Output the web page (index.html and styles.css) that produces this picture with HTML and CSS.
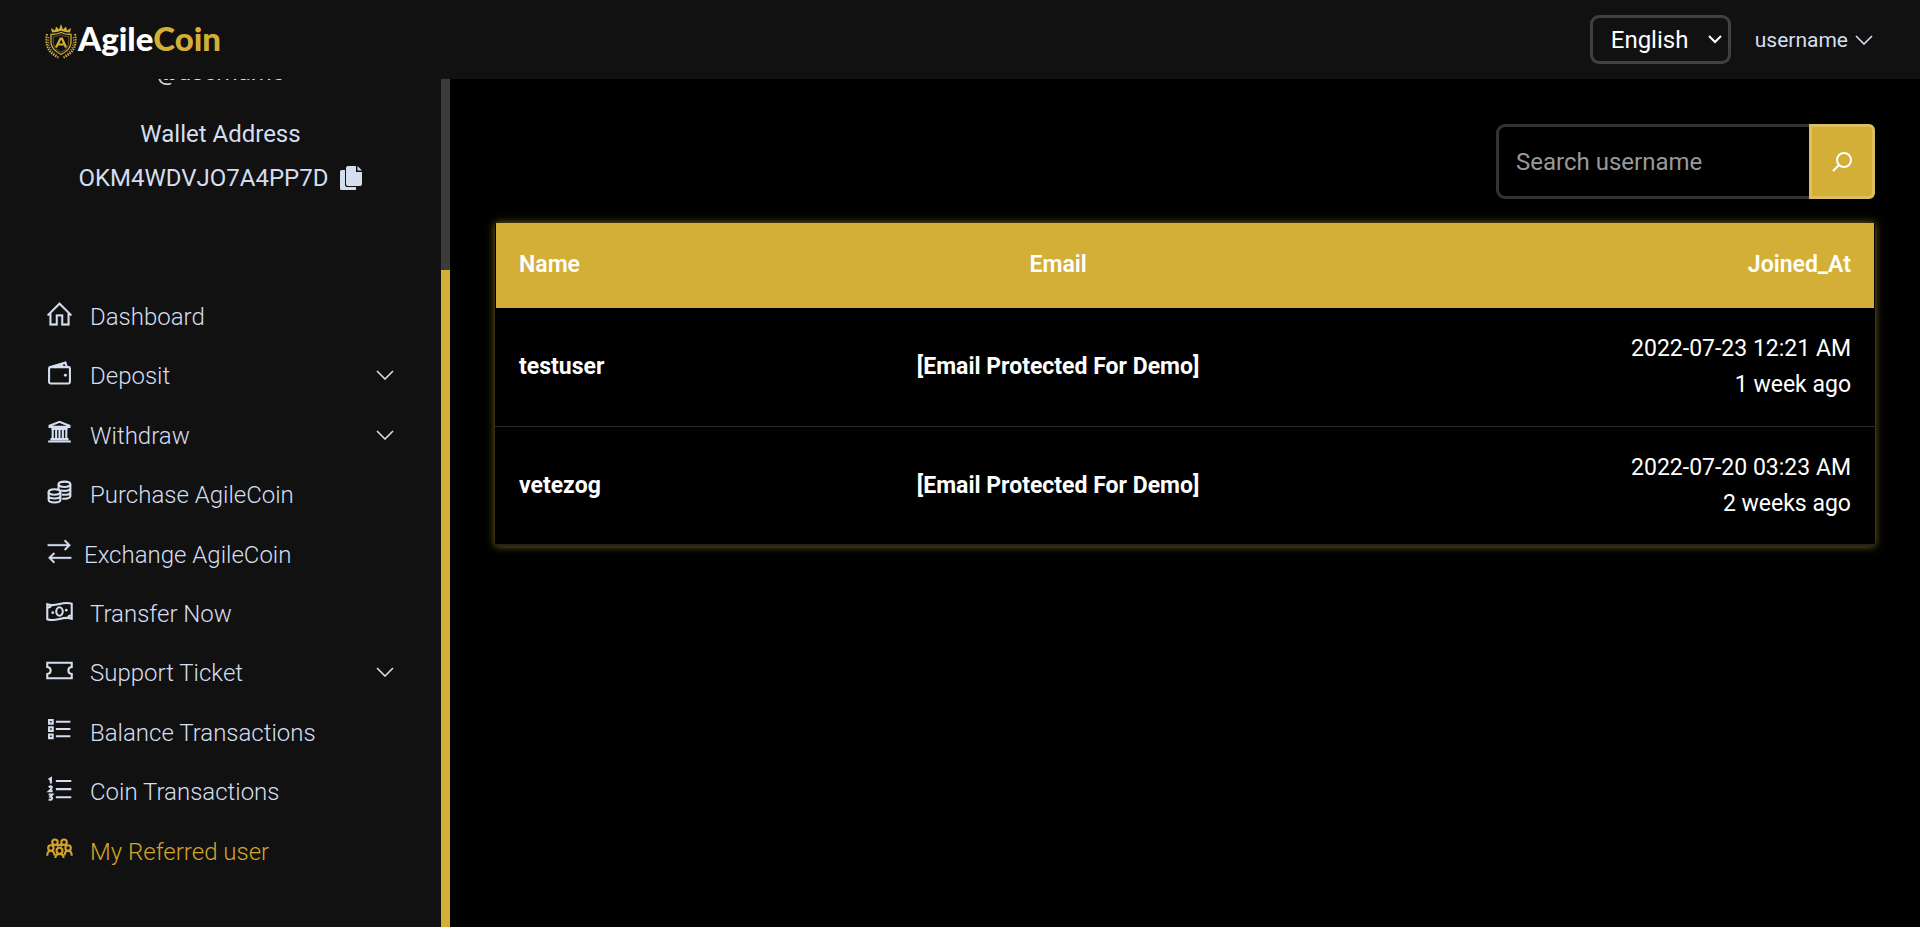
FILE: index.html
```html
<!DOCTYPE html>
<html lang="en">
<head>
<meta charset="utf-8">
<title>AgileCoin - My Referred user</title>
<link rel="stylesheet" href="styles.css">
</head>
<body>
<header class="topbar">
  <a class="logo" href="#">
    <svg class="logo-mark" viewBox="0 0 34 36" aria-hidden="true">
      <g fill="none" stroke="currentColor">
        <path stroke-width="1.3" d="M7 10.500Q13 10.500 17 8.500Q21 10.500 27 10.500V19Q26 26 17 30.500Q8 26 7 19Z"/>
        <path stroke-width="1" d="M9.300 12.500Q14 12.300 17 10.800Q20 12.300 24.700 12.500V19Q24 25 17 28.300Q10 25 9.300 19Z" opacity=".45"/>
        <path stroke-width="2.200" d="M12 23.500L16.500 14.500H18L22 23.500M14 20.500H20"/>
        <path stroke-width="2" stroke-dasharray="1.500 1" d="M3 10Q-.5 27 14.500 33.500M31 10Q34.500 27 19.500 33.500"/>
        <path stroke-width="1.600" stroke-dasharray="1.300 1.200" d="M4.500 13Q3 25 13 31.500M29.500 13Q31 25 21 31.500" opacity=".7"/>
      </g>
      <path fill="currentColor" d="M8 8.500L7 4L11 6.500L12 2.500L15 5.500L17 0L19 5.500L22 2.500L23 6.500L27 4L26 8.500Q21 8.500 17 6.800Q13 8.500 8 8.500Z"/>
    </svg>
    <span class="logo-text">Agile<span class="gold">Coin</span></span>
  </a>
  <div class="top-actions">
    <div class="lang">
      <select class="lang-select" aria-label="Language"><option>English</option><option>Spanish</option></select>
      <svg class="lang-arrow" viewBox="0 0 14 9" aria-hidden="true"><path d="M1 1L7 7L13 1"/></svg>
    </div>
    <button class="user-menu" type="button">username
      <svg class="chevron" viewBox="0 0 18 10" aria-hidden="true"><path d="M1 1L9 9L17 1"/></svg>
    </button>
  </div>
</header>
<div class="shell">
  <aside class="sidebar">
    <div class="side-scroll">
      <div class="profile">
        <p class="handle">@username</p>
        <p class="wallet-label">Wallet Address</p>
        <p class="wallet">OKM4WDVJO7A4PP7D
          <button class="copy" type="button" aria-label="Copy wallet address">
            <svg viewBox="0 0 22 24" aria-hidden="true"><path d="M8 0H16V6H22V18Q22 20 20 20H8Q6 20 6 18V2Q6 0 8 0ZM17.500 0L22 4.500H17.500ZM1.500 4H5V19Q5 21 7 21H16V24H1.500Q0 24 0 22.500V5.500Q0 4 1.500 4Z"/></svg>
          </button>
        </p>
      </div>
      <nav>
        <ul class="menu">
          <li><a class="item" href="#"><svg class="icon fill" viewBox="0 0 32 32" aria-hidden="true"><path d="M16 2.594L2.281 16.281L3.719 17.719L5 16.438V28H14V18H18V28H27V16.438L28.281 17.719L29.719 16.281ZM16 5.438L25 14.438V26H20V16H12V26H7V14.438Z"/></svg>Dashboard</a></li>
          <li><a class="item" href="#"><svg class="icon" viewBox="0 0 32 32" aria-hidden="true"><rect x="4.500" y="9" width="23" height="18" rx="1.500"/><path d="M5 9L22.500 4L24 8.500M11 9L20 6.700"/><circle class="dot" cx="22.500" cy="18" r="1.600"/></svg>Deposit<svg class="chevron" viewBox="0 0 18 10" aria-hidden="true"><path d="M1 1L9 9L17 1"/></svg></a></li>
          <li><a class="item" href="#"><svg class="icon" viewBox="0 0 32 32" aria-hidden="true"><path d="M5 9.800V8.600L16 4.300L27 8.600V9.800ZM7 12H25M8.500 12V23M12.300 12V23M16 12V23M19.700 12V23M23.500 12V23M6 23.300H26M3.500 26H28.500"/></svg>Withdraw<svg class="chevron" viewBox="0 0 18 10" aria-hidden="true"><path d="M1 1L9 9L17 1"/></svg></a></li>
          <li><a class="item" href="#"><svg class="icon" viewBox="0 0 32 32" aria-hidden="true"><ellipse cx="21.500" cy="7" rx="6.500" ry="3"/><path d="M15 7V12M28 7V20C28 22 24 23.300 19 22.800M28 11.300C28 14 21 15 17 13.500M28 15.600C28 18 23 19 18.500 18.200"/><ellipse cx="10.500" cy="15.500" rx="6.500" ry="3"/><path d="M4 15.500V24C4 28 17 28 17 24V15.500M4 19.700C4 23.500 17 23.500 17 19.700"/></svg>Purchase AgileCoin</a></li>
          <li><a class="item tight" href="#"><svg class="icon fill" viewBox="0 0 32 32" aria-hidden="true"><path d="M22.406 3L21 4.406L24.594 8H3V10H24.594L21 13.594L22.406 15L28.406 9ZM9.594 17L3.594 23L9.594 29L11 27.594L7.406 24H29V22H7.406L11 18.406Z"/></svg>Exchange AgileCoin</a></li>
          <li><a class="item" href="#"><svg class="icon" viewBox="0 0 32 32" aria-hidden="true"><path d="M2.500 8C12 12 20 3.500 29.500 7.500V24C20 20 12 28.500 2.500 24.500Z"/><ellipse cx="16" cy="16" rx="3.600" ry="4.600"/><path d="M2.500 11.500Q6 12 6.500 9M29.500 20.500Q26 20 25.500 23"/><circle class="dot" cx="8.500" cy="17.300" r="1.500"/><circle class="dot" cx="23.500" cy="14.500" r="1.500"/></svg>Transfer Now</a></li>
          <li><a class="item" href="#"><svg class="icon" viewBox="0 0 32 32" aria-hidden="true"><path d="M2.500 7.500H29.500V12.200C24.500 12.700 24.500 19.300 29.500 19.800V24.500H2.500V19.800C7.500 19.300 7.500 12.700 2.500 12.200Z"/></svg>Support Ticket<svg class="chevron" viewBox="0 0 18 10" aria-hidden="true"><path d="M1 1L9 9L17 1"/></svg></a></li>
          <li><a class="item" href="#"><svg class="icon" viewBox="0 0 32 32" aria-hidden="true"><path d="M4.500 5.500H8.500V9.500H4.500ZM4.500 13.500H8.500V17.500H4.500ZM4.500 21.500H8.500V25.500H4.500ZM12 7.500H28M12 15.500H28M12 23.500H28"/></svg>Balance Transactions</a></li>
          <li><a class="item" href="#"><svg class="icon" viewBox="0 0 32 32" aria-hidden="true"><path d="M4 5L6.500 3.500V9.500M4 13.300Q7.500 11.500 7.500 13.800Q7.500 15.300 4.500 18H8.500M4 21.500H8L6 24Q8.200 24.300 7.700 26.300Q7 28 4 27M12 6.700H29M12 15.600H29M12 24.600H29"/></svg>Coin Transactions</a></li>
          <li><a class="item active" href="#" aria-current="page"><svg class="icon" viewBox="0 0 32 32" aria-hidden="true"><circle cx="11" cy="9" r="3"/><circle cx="21" cy="9" r="3"/><circle cx="6.500" cy="15.500" r="3"/><circle cx="25.500" cy="15.500" r="3"/><circle cx="16" cy="18.500" r="3.300"/><path d="M2.500 24Q2.500 18.500 6.500 18.500Q10 18.500 10.500 23.500M21.500 23.500Q22 18.500 25.500 18.500Q29.500 18.500 29.500 24M11.500 26.500Q11.500 22 16 22Q20.500 22 20.500 26.500M13 13.500Q16 10.500 19 13.500"/></svg>My Referred user</a></li>
        </ul>
      </nav>
    </div>
    <div class="rail"><div class="thumb"></div></div>
  </aside>
  <main class="content">
    <form class="search">
      <input class="search-input" type="text" placeholder="Search username" aria-label="Search username">
      <button class="search-btn" type="button" aria-label="Search">
        <svg viewBox="0 0 20 20" aria-hidden="true"><circle cx="12" cy="8" r="7"/><path d="M7 13L1 19"/></svg>
      </button>
    </form>
    <table class="users">
      <thead><tr><th>Name</th><th>Email</th><th>Joined_At</th></tr></thead>
      <tbody>
        <tr><td>testuser</td><td>[Email Protected For Demo]</td><td>2022-07-23 12:21 AM<br>1 week ago</td></tr>
        <tr><td>vetezog</td><td>[Email Protected For Demo]</td><td>2022-07-20 03:23 AM<br>2 weeks ago</td></tr>
      </tbody>
    </table>
  </main>
</div>
</body>
</html>
```
FILE: styles.css
```css
* { box-sizing: border-box; }

body {
  margin: 0;
  height: 100vh;
  display: flex;
  flex-direction: column;
  background: #000;
  color: #fff;
  font-family: Roboto, sans-serif;
  font-size: 24px;
  line-height: 36px;
}

button, input, select { font: inherit; color: inherit; }
a { color: inherit; text-decoration: none; }
svg { display: block; flex: none; }

.gold { color: #d4af37; }

.topbar {
  display: flex;
  align-items: center;
  justify-content: space-between;
  padding: 15px 47px 15px 44px;
  background: #111;
}
.logo { display: flex; align-items: flex-end; }
.logo-mark { width: 34px; height: 36px; }
.logo-mark { color: #d4af37; }
.logo-text { padding-bottom: 4px; font: 900 33px/36px Lato, sans-serif; }

.top-actions { display: flex; align-items: center; gap: 24px; }
.lang { display: grid; align-items: center; }
.lang-select {
  grid-area: 1 / 1;
  appearance: none;
  width: 141px;
  height: 49px;
  padding: 0 18px;
  border: 3px solid #404040;
  border-radius: 9px;
  background: #111;
  color: #fff;
}
.lang-arrow {
  grid-area: 1 / 1;
  justify-self: end;
  width: 14px;
  margin-right: 9px;
  pointer-events: none;
  fill: none;
  stroke: #fff;
  stroke-width: 2;
}
.user-menu {
  display: flex;
  align-items: center;
  gap: 7px;
  padding: 0;
  border: 0;
  background: none;
  color: #d5deef;
  font-size: 21px;
}
.chevron {
  width: 18px;
  height: 10px;
  fill: none;
  stroke: currentColor;
  stroke-width: 1.6;
}

.shell { flex: 1; min-height: 0; display: flex; }

.sidebar {
  width: 450px;
  flex: none;
  display: flex;
  background: #111;
  color: #d5deef;
}
.side-scroll {
  flex: 1;
  display: flex;
  flex-direction: column;
  justify-content: flex-end;
  overflow: hidden;
  padding: 0 45px 34px;
}
.profile { padding-bottom: 103px; text-align: center; }
.profile p { margin: 0; }
.profile .handle { margin-bottom: 26px; }
.profile .wallet-label { margin-bottom: 8px; }
.profile .wallet { display: flex; align-items: center; justify-content: center; gap: 12px; }
.copy { padding: 0; border: 0; background: none; }
.copy svg { width: 22px; height: 24px; fill: currentColor; }

.menu {
  display: grid;
  grid-auto-rows: 1fr;
  min-height: 594px;
  margin: 0;
  padding: 0;
  list-style: none;
}
.item {
  display: flex;
  align-items: center;
  gap: 16px;
  padding-right: 2px;
  font-weight: 300;
}
.item.tight { gap: 10px; }
.item.active { color: #d4a52a; }
.item .icon {
  width: 29px;
  height: 29px;
  margin-bottom: 6px;
  fill: none;
  stroke: currentColor;
  stroke-width: 2.3;
}
.item .icon.fill { fill: currentColor; stroke-width: 0.3; }
.icon .dot { fill: currentColor; stroke: none; }
.item .chevron { margin-left: auto; margin-bottom: 2px; }

.rail { width: 9px; background: #3b3b3b; display: flex; align-items: flex-end; }
.thumb { width: 100%; height: 77.5%; background: #d4af37; }

.content { flex: 1; min-width: 0; padding: 45px; }

.search { display: flex; justify-content: flex-end; margin-bottom: 24px; }
.search-input {
  width: 316px;
  height: 75px;
  padding: 0 17px;
  border: 3px solid #333;
  border-radius: 9px 0 0 9px;
  background: #000;
  color: #fff;
}
.search-input::placeholder { color: #999; }
.search-btn {
  display: grid;
  place-items: center;
  width: 66px;
  margin-left: -3px;
  border: 3px solid #debf5e;
  border-radius: 0 6px 6px 0;
  background: #d4af37;
}
.search-btn svg {
  width: 20px;
  height: 20px;
  fill: none;
  stroke: #fff;
  stroke-width: 2;
}

.users {
  width: 100%;
  border-collapse: separate;
  border-spacing: 0;
  box-shadow: 0 0 8px rgba(212, 175, 55, .6);
  background: #000;
  font-size: 23px;
}
.users th {
  padding: 24px 23px 25px;
  background: #d4af37;
  font-weight: 600;
  text-align: left;
}
.users th:first-child { border-left: 1px solid #000; }
.users th:last-child { border-right: 1px solid #000; }
.users td {
  padding: 23px 24px;
  border-bottom: 1px solid #2b2b2b;
  font-weight: 700;
}
.users tr > :nth-child(2) { text-align: center; }
.users tr > :nth-child(3) { text-align: right; }
.users td:nth-child(3) { font-weight: 400; }
.users tbody tr:last-child td { padding-bottom: 22px; border-bottom: 2px solid #222; }
```
